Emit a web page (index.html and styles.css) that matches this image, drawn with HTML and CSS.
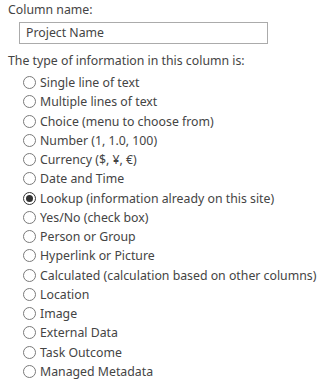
FILE: index.html
```html
<!DOCTYPE html>
<html>
<head>
<meta charset="utf-8">
<link rel="stylesheet" href="styles.css">
</head>
<body>
<div class="panel">
  <div class="label">Column name:</div>
  <div class="namebox">Project Name</div>
  <div class="label type-label">The type of information in this column is:</div>
  <ul class="options">
    <li class="opt"><span class="radio"></span><span>Single line of text</span></li>
    <li class="opt"><span class="radio"></span><span>Multiple lines of text</span></li>
    <li class="opt"><span class="radio"></span><span>Choice (menu to choose from)</span></li>
    <li class="opt"><span class="radio"></span><span>Number (1, 1.0, 100)</span></li>
    <li class="opt"><span class="radio"></span><span>Currency ($, ¥, €)</span></li>
    <li class="opt"><span class="radio"></span><span>Date and Time</span></li>
    <li class="opt"><span class="radio checked"></span><span>Lookup (information already on this site)</span></li>
    <li class="opt"><span class="radio"></span><span>Yes/No (check box)</span></li>
    <li class="opt"><span class="radio"></span><span>Person or Group</span></li>
    <li class="opt"><span class="radio"></span><span>Hyperlink or Picture</span></li>
    <li class="opt"><span class="radio"></span><span>Calculated (calculation based on other columns)</span></li>
    <li class="opt"><span class="radio"></span><span>Location</span></li>
    <li class="opt"><span class="radio"></span><span>Image</span></li>
    <li class="opt"><span class="radio"></span><span>External Data</span></li>
    <li class="opt"><span class="radio"></span><span>Task Outcome</span></li>
    <li class="opt"><span class="radio"></span><span>Managed Metadata</span></li>
  </ul>
</div>
</body>
</html>
```

FILE: styles.css
```css
html, body {
  margin: 0;
  padding: 0;
  background: #ffffff;
}
body {
  font-family: "Noto Sans", "Open Sans", sans-serif;
  font-size: 12.3px;
  color: #444444;
}
.panel {
  padding: 1px 0 0 8px;
}
.label {
  line-height: 18px;
}
.namebox {
  margin: 3px 0 0 11px;
  width: 241px;
  height: 20px;
  border: 1px solid #ababab;
  padding: 0 0 0 6px;
  line-height: 20px;
}
.type-label {
  margin-top: 8px;
}
.options {
  list-style: none;
  margin: 3px 0 0 0;
  padding: 0 0 0 15px;
}
.opt {
  display: flex;
  align-items: center;
  height: 19.25px;
  white-space: nowrap;
}
.radio {
  box-sizing: border-box;
  width: 13px;
  height: 13px;
  border: 1px solid #7a7a7a;
  border-radius: 50%;
  margin-right: 4px;
  flex: none;
  display: flex;
  align-items: center;
  justify-content: center;
}
.radio.checked {
  border-color: #333333;
}
.radio.checked::after {
  content: "";
  width: 7px;
  height: 7px;
  border-radius: 50%;
  background: #333333;
}
```
